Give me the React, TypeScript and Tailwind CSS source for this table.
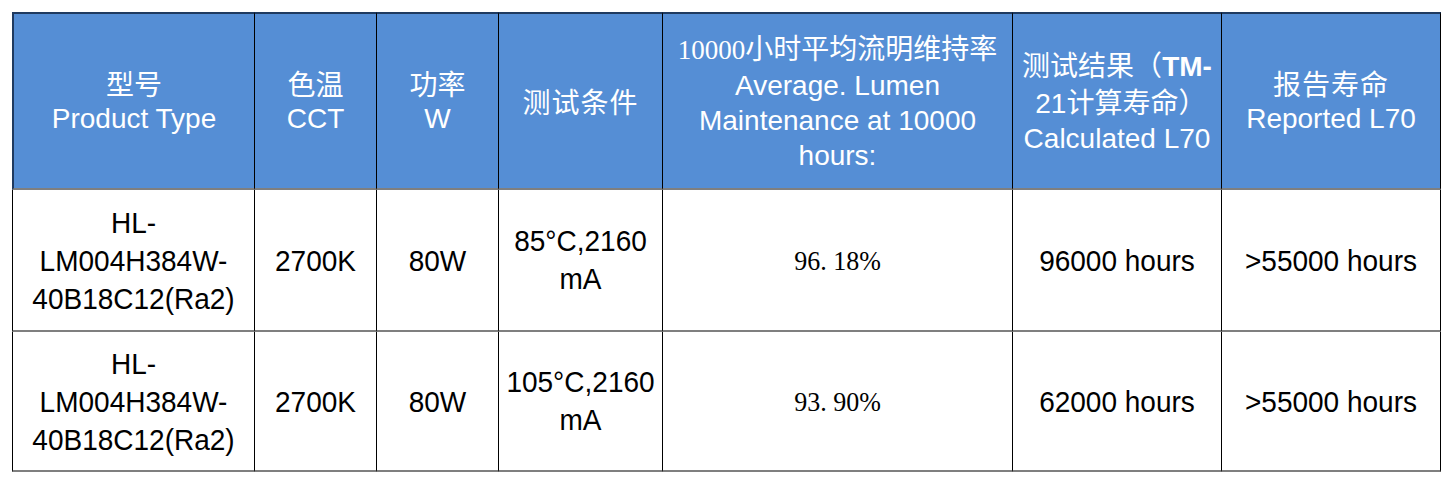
import React from 'react';

type Row = {
    model: string[];
    cct: string;
    power: string;
    condition: string[];
    maintenance: string;
    calculated: string;
    reported: string;
};

const rows: Row[] = [
    {
        model: ['HL-', 'LM004H384W-', '40B18C12(Ra2)'],
        cct: '2700K',
        power: '80W',
        condition: ['85°C,2160', 'mA'],
        maintenance: '96. 18%',
        calculated: '96000 hours',
        reported: '>55000 hours',
    },
    {
        model: ['HL-', 'LM004H384W-', '40B18C12(Ra2)'],
        cct: '2700K',
        power: '80W',
        condition: ['105°C,2160', 'mA'],
        maintenance: '93. 90%',
        calculated: '62000 hours',
        reported: '>55000 hours',
    },
];

const sans = "font-['Liberation_Sans','Noto_Sans_CJK_SC',sans-serif]";
const cjk = "font-['Noto_Sans_CJK_SC',sans-serif]";

const HeadCell: React.FC<{ first?: boolean; children: React.ReactNode }> = ({ first, children }) => (
    <div
        className={`flex flex-col items-center justify-center bg-[#558ed5] text-white text-center text-[28px] leading-[35px] border-t-2 border-t-[#1f3a60] border-b-2 border-b-[#7f7f7f] border-r border-r-black ${
            first ? 'border-l-2 border-l-[#1f3a60]' : ''
        }`}
    >
        {children}
    </div>
);

const BodyCell: React.FC<{ first?: boolean; children: React.ReactNode }> = ({ first, children }) => (
    <div
        className={`flex flex-col items-center justify-center text-center text-black text-[28px] leading-[35px] border-r border-r-black border-b-2 border-b-[#7f7f7f] ${
            first ? 'border-l border-l-black' : ''
        }`}
    >
        <div className="scale-y-[1.08]">{children}</div>
    </div>
);

const Lines: React.FC<{ lines: string[] }> = ({ lines }) => (
    <>
        {lines.map((l, i) => (
            <div key={i} className="whitespace-nowrap">{l}</div>
        ))}
    </>
);

export default function App() {
    return (
        <div className={`w-[1453px] h-[485px] bg-white ${sans}`}>
            <div className="ml-[12px] pt-[12px] grid grid-cols-[243px_122px_122px_164px_350px_209px_219px] grid-rows-[178px_142px_140px] w-fit">
                <HeadCell first>
                    <div className={cjk}>型号</div>
                    <div>Product Type</div>
                </HeadCell>
                <HeadCell>
                    <div className={cjk}>色温</div>
                    <div>CCT</div>
                </HeadCell>
                <HeadCell>
                    <div className={cjk}>功率</div>
                    <div>W</div>
                </HeadCell>
                <HeadCell>
                    <div className={`${cjk} tracking-[1px]`}>测试条件</div>
                </HeadCell>
                <HeadCell>
                    <div className="whitespace-nowrap">
                        <span className="font-['Liberation_Serif',serif] text-[27px]">10000</span>
                        <span className={cjk}>小时平均流明维持率</span>
                    </div>
                    <div>Average. Lumen</div>
                    <div className="whitespace-nowrap">Maintenance at 10000</div>
                    <div>hours:</div>
                </HeadCell>
                <HeadCell>
                    <div className="whitespace-nowrap">
                        <span className={cjk}>测试结果（</span>
                        <span className="font-bold">TM-</span>
                    </div>
                    <div className="whitespace-nowrap">
                        <span>{'\u00a021'}</span>
                        <span className={cjk}>计算寿命）</span>
                    </div>
                    <div className="whitespace-nowrap">Calculated L70</div>
                </HeadCell>
                <HeadCell>
                    <div className={`${cjk} tracking-[1px]`}>报告寿命</div>
                    <div className="whitespace-nowrap">Reported L70</div>
                </HeadCell>

                {rows.map((r, i) => (
                    <React.Fragment key={i}>
                        <BodyCell first>
                            <Lines lines={r.model} />
                        </BodyCell>
                        <BodyCell>{r.cct}</BodyCell>
                        <BodyCell>{r.power}</BodyCell>
                        <BodyCell>
                            <Lines lines={r.condition} />
                        </BodyCell>
                        <BodyCell>
                            <span className="font-['Liberation_Serif',serif] text-[26px] whitespace-pre">{r.maintenance}</span>
                        </BodyCell>
                        <BodyCell>
                            <span className="whitespace-nowrap">{r.calculated}</span>
                        </BodyCell>
                        <BodyCell>
                            <span className="whitespace-nowrap">{r.reported}</span>
                        </BodyCell>
                    </React.Fragment>
                ))}
            </div>
        </div>
    );
}
